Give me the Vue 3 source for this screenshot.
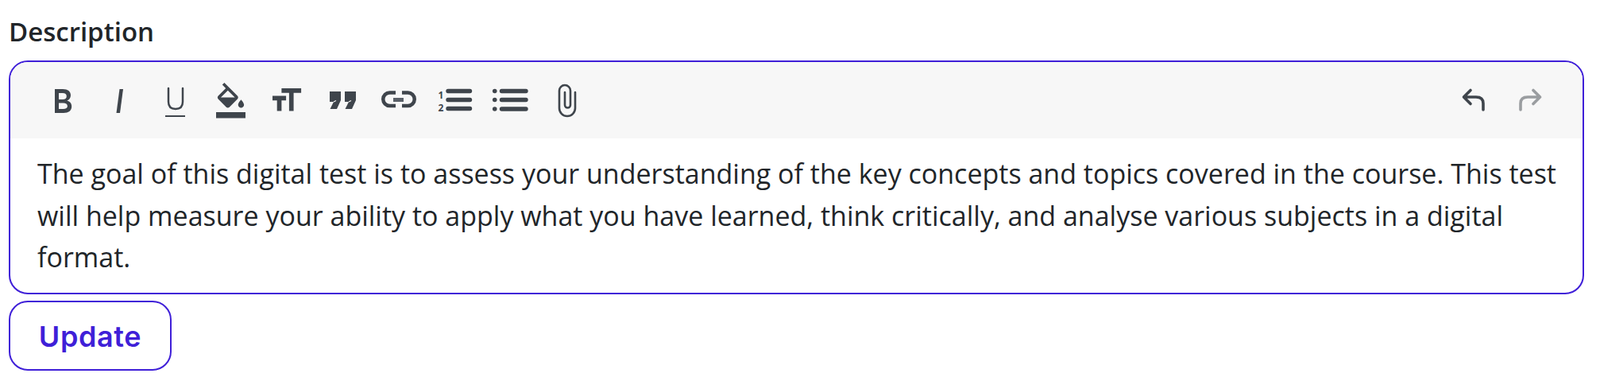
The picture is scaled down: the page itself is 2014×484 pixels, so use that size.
<script setup>
const description =
  'The goal of this digital test is to assess your understanding of the key concepts and topics covered in the course. This test will help measure your ability to apply what you have learned, think critically, and analyse various subjects in a digital format.'
</script>

<template>
  <div class="page">
    <label class="field_label">Description</label>
    <div class="editor">
      <div class="toolbar">
        <div class="tool_group">
          <button class="tool">
            <svg viewBox="0 0 60 60"><path fill-rule="evenodd" d="M20 16h10c6.500 0 10 2.800 10 7.800 0 3.400-1.800 5.700-4.600 6.700 3.600.9 5.800 3.500 5.800 7.300 0 5.500-4 8.200-10.200 8.200H20zM25 21v7.900h4.800c3.400 0 5-1.500 5-4 0-2.600-1.700-3.900-5-3.900zm0 12.400V41h5.500c3.600 0 5.400-1.300 5.400-3.800 0-2.500-1.900-3.800-5.400-3.800z" /></svg>
          </button>
          <button class="tool">
            <svg viewBox="0 0 60 60"><path d="M30.500 16H35l-4 30h-4.500z" /></svg>
          </button>
          <button class="tool">
            <svg viewBox="0 0 60 60"><path class="line" stroke-width="2.500" d="M22 15v17c0 6 3 9 9 9s9-3 9-9V15" /><path d="M18 49h25v2H18z" /></svg>
          </button>
          <button class="tool">
            <svg viewBox="0 0 60 60"><path transform="translate(7.300 8) scale(1.850)" d="M16.560 8.940L7.620 0 6.210 1.410l2.380 2.380-5.150 5.150c-.59.59-.59 1.540 0 2.120l5.500 5.500c.29.29.68.44 1.060.44s.77-.15 1.060-.44l5.500-5.500c.59-.58.59-1.530 0-2.120zM5.210 10L10 5.210 14.790 10H5.210zM19 11.500s-2 2.170-2 3.500c0 1.100.9 2 2 2s2-.9 2-2c0-1.330-2-3.500-2-3.500zM2 20h20v4H2v-4z" /></svg>
          </button>
          <button class="tool">
            <svg viewBox="0 0 60 60"><path transform="translate(6.300 7.400) scale(1.900)" d="M9 4v3h5v12h3V7h5V4H9zm-6 8h3v7h3v-7h3V9H3v3z" /></svg>
          </button>
          <button class="tool">
            <svg viewBox="0 0 60 60">
              <path d="M13 19h14v11l-5 11h-8.500l4.500-9h-5zM32 19h14v11l-5 11h-8.500l4.500-9h-5z" />
              <path class="quote_slit" d="M18 32l3-1.500M37 32l3-1.500" />
            </svg>
          </button>
          <button class="tool">
            <svg viewBox="0 0 60 60">
              <path class="link_arc" d="M26 20.500h-7.500a8.250 8.250 0 0 0 0 16.500H26M34 20.500h7.500a8.250 8.250 0 0 1 0 16.500H34" />
              <path class="link_bar" d="M23 27h13v5H23z" />
            </svg>
          </button>
          <button class="tool">
            <svg viewBox="0 0 60 60">
              <text class="digit" x="8.500" y="28">1</text>
              <text class="digit" x="8.500" y="44">2</text>
              <path class="line" stroke-width="5.400" d="M21 18.500h27.500M21 29.500h27.500M21 40.500h27.500" />
            </svg>
          </button>
          <button class="tool">
            <svg viewBox="0 0 60 60">
              <circle cx="9.750" cy="18.500" r="2.800" /><circle cx="9.750" cy="29.500" r="2.800" /><circle cx="9.750" cy="41" r="2.800" />
              <path class="line" stroke-width="5.400" d="M18.500 18.500H49M18.500 29.500H49M18.500 41H49" />
            </svg>
          </button>
          <button class="tool">
            <svg viewBox="0 0 60 60"><path class="line" stroke-width="2.600" d="M27 20v16a3.500 3.500 0 0 0 7 0V18a7 7 0 0 0-14 0v22a10 10 0 0 0 20 0V20" /></svg>
          </button>
        </div>
        <div class="tool_group">
          <button class="tool">
            <svg viewBox="0 0 60 60"><path class="line" stroke-width="3.600" d="M26 17.500L17.500 26l8.500 8.500M18 26h15c6 0 9 3 9 8v8" /></svg>
          </button>
          <button class="tool disabled">
            <svg viewBox="0 0 60 60"><path class="line" stroke-width="3.600" d="M34 17.500l8.500 8.500-8.500 8.500M42 26H27c-6 0-9 3-9 8v8" /></svg>
          </button>
        </div>
      </div>
      <div class="content">{{ description }}</div>
    </div>
    <button class="update_btn">Update</button>
  </div>
</template>

<style>
body {
  margin: 0;
  background: #fff;
}
</style>

<style scoped>
.page {
  width: 2014px;
  height: 484px;
  box-sizing: border-box;
  padding: 18px 20px 0 11px;
  font-family: "Open Sans", "Noto Sans", sans-serif;
  color: #212529;
  overflow: hidden;
}
.field_label {
  display: block;
  height: 58px;
  font-size: 33px;
  line-height: 44px;
  font-weight: 600;
}
.editor {
  border: 2px solid #3f1fd8;
  border-radius: 24px;
  overflow: hidden;
}
.toolbar {
  display: flex;
  justify-content: space-between;
  height: 96px;
  padding: 0 31px;
  background: #f7f7f7;
}
.tool_group {
  display: flex;
}
.tool {
  display: flex;
  align-items: center;
  justify-content: center;
  width: 70.500px;
  padding: 0;
  border: 0;
  background: none;
  fill: #3f454c;
}
.tool svg {
  width: 60px;
  height: 60px;
}
.tool.disabled svg {
  opacity: 0.5;
}
.line {
  fill: none;
  stroke: #3f454c;
  stroke-linecap: round;
  stroke-linejoin: round;
}
.link_arc {
  fill: none;
  stroke: #3f454c;
  stroke-width: 4.500;
}
.link_bar {
  fill: #5a6068;
}
.quote_slit {
  fill: none;
  stroke: #f7f7f7;
  stroke-width: 1.200;
}
.digit {
  font-family: "Open Sans", sans-serif;
  font-size: 12px;
  font-weight: 700;
}
.content {
  padding: 18px 31px 18px 34px;
  font-size: 34px;
  line-height: 52.500px;
}
.update_btn {
  display: block;
  width: 205px;
  height: 88px;
  margin-top: 8px;
  padding: 3px 0 0;
  border: 2px solid #3f1fd8;
  border-radius: 24px;
  background: #fff;
  color: #3f1fd8;
  font-family: "Inter", sans-serif;
  font-size: 36px;
  font-weight: 600;
  letter-spacing: 0.6px;
}
</style>
